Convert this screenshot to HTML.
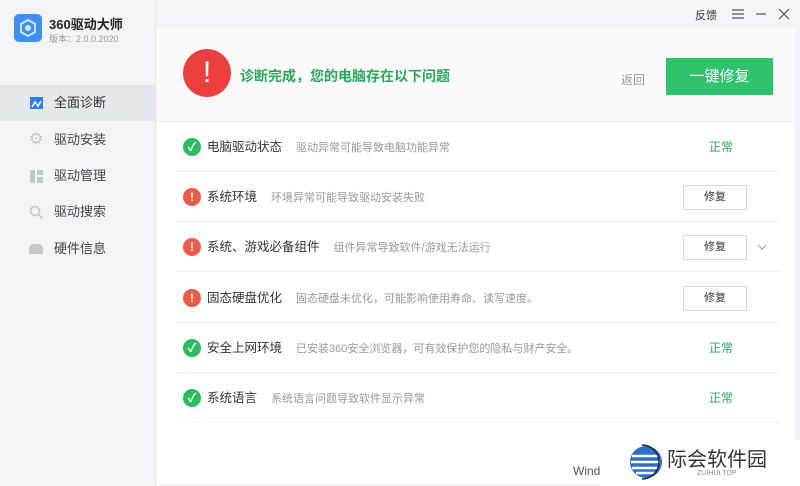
<!DOCTYPE html>
<html><head><meta charset="utf-8"><style>
*{margin:0;padding:0;box-sizing:border-box}
body{width:800px;height:486px;overflow:hidden;background:#f2f4f7;font-family:"Liberation Sans","Noto Sans CJK SC",sans-serif;position:relative;color:#333}
.abs{position:absolute}
.side{left:0;top:0;width:156px;height:486px;background:#f2f4f7;border-right:1px solid #e6e8eb}
.nav{left:0;width:156px;height:36px;font-size:13px;color:#333;line-height:36px;padding-left:54px}
.nav.act{background:#e4e7ec}
.main{left:157px;top:28px;width:638px;height:456px;background:#fff}
.hdr{left:157px;top:28px;width:638px;height:94px;background:#fafafa;border-bottom:1px solid #eee}
.row{left:175px;width:605px;height:50px;border-bottom:1px solid #f0f0f0}
.ic{position:absolute;left:8px;top:16px;width:18px;height:18px;border-radius:50%;color:#fff;font-size:12px;font-weight:bold;text-align:center;line-height:18px}
.ok{background:#2bbd5f}.er{background:#ec5a4a}
.t{position:absolute;left:32px;top:16px;font-size:12.5px;color:#333;line-height:18px}
.d{font-size:11px;color:#999;margin-left:14px}
.n{position:absolute;left:534px;top:16px;font-size:12px;color:#2aa85a;line-height:18px}
.b{position:absolute;left:508px;top:13px;width:64px;height:25px;border:1px solid #d8d8d8;background:#fff;font-size:11px;text-align:center;line-height:23px;color:#333}
</style></head><body>
<div class="abs side"></div>
<div class="abs" style="left:14px;top:14px;width:28px;height:28px;background:#3d8ff0;border-radius:5px"><svg width="28" height="28"><polygon points="14,6 21,10 21,18 14,22 7,18 7,10" fill="none" stroke="#cfe4ff" stroke-width="2"/><circle cx="14" cy="14" r="3" fill="#cfe4ff"/></svg></div>
<div class="abs" style="left:49px;top:14px;font-size:13px;font-weight:bold;color:#222">360驱动大师</div>
<div class="abs" style="left:49px;top:32px;font-size:9px;color:#999">版本：2.0.0.2020</div>
<div class="abs nav act" style="top:85px">全面诊断</div>
<div class="abs" style="left:30px;top:97px;width:13px;height:12px;background:#2f7fe8"><svg width="13" height="12"><polyline points="2,9 5,4 8,8 11,3" fill="none" stroke="#fff" stroke-width="1.5"/></svg></div>
<div class="abs nav" style="top:122px;color:#444">驱动安装</div>
<div class="abs" style="left:29px;top:132px;font-size:16px;color:#c4c7cc;line-height:16px">⚙</div>
<div class="abs nav" style="top:158px;color:#444">驱动管理</div>
<div class="abs" style="left:30px;top:170px;width:5px;height:13px;background:#c4c7cc"></div><div class="abs" style="left:37px;top:170px;width:6px;height:5px;background:#c4c7cc"></div><div class="abs" style="left:37px;top:177px;width:6px;height:6px;background:#c4c7cc"></div>
<div class="abs nav" style="top:194px;color:#444">驱动搜索</div>
<svg class="abs" style="left:29px;top:205px" width="15" height="15"><circle cx="6" cy="6" r="4.5" fill="none" stroke="#c4c7cc" stroke-width="1.6"/><line x1="9.5" y1="9.5" x2="13.5" y2="13.5" stroke="#c4c7cc" stroke-width="1.8"/></svg>
<div class="abs nav" style="top:231px;color:#444">硬件信息</div>
<div class="abs" style="left:29px;top:244px;width:14px;height:10px;background:#c4c7cc;border-radius:5px 5px 1px 1px"></div>

<div class="abs" style="left:695px;top:7px;font-size:11px;color:#333">反馈</div>
<svg class="abs" style="left:731px;top:8px" width="14" height="12"><path d="M1 2H13M1 6H13M1 10H13" stroke="#555" stroke-width="1.2"/></svg>
<svg class="abs" style="left:755px;top:8px" width="12" height="12"><path d="M1 6H11" stroke="#555" stroke-width="1.2"/></svg>
<svg class="abs" style="left:778px;top:8px" width="12" height="12"><path d="M1 1L11 11M11 1L1 11" stroke="#555" stroke-width="1.2"/></svg>

<div class="abs main"></div>
<div class="abs hdr"></div>
<div class="abs" style="left:183px;top:49px;width:48px;height:48px;border-radius:50%;background:#ec3f3f;color:#fff;font-size:30px;text-align:center;line-height:48px">!</div>
<div class="abs" style="left:240px;top:66px;font-size:14px;font-weight:bold;color:#2aa85a">诊断完成，您的电脑存在以下问题</div>
<div class="abs" style="left:621px;top:71px;font-size:12px;color:#999">返回</div>
<div class="abs" style="left:666px;top:58px;width:107px;height:37px;background:#2ec46b;color:#fff;font-size:15px;text-align:center;line-height:37px">一键修复</div>

<div class="abs row" style="top:122px"><div class="ic ok">✓</div><div class="t">电脑驱动状态<span class="d">驱动异常可能导致电脑功能异常</span></div><div class="n">正常</div></div>
<div class="abs row" style="top:172px"><div class="ic er">!</div><div class="t">系统环境<span class="d">环境异常可能导致驱动安装失败</span></div><div class="b">修复</div></div>
<div class="abs row" style="top:222px"><div class="ic er">!</div><div class="t">系统、游戏必备组件<span class="d">组件异常导致软件/游戏无法运行</span></div><div class="b">修复</div><svg style="position:absolute;left:582px;top:21px" width="10" height="8"><path d="M1 2L5 6L9 2" fill="none" stroke="#999"/></svg></div>
<div class="abs row" style="top:273px"><div class="ic er">!</div><div class="t">固态硬盘优化<span class="d">固态硬盘未优化，可能影响使用寿命、读写速度。</span></div><div class="b">修复</div></div>
<div class="abs row" style="top:323px"><div class="ic ok">✓</div><div class="t">安全上网环境<span class="d">已安装360安全浏览器，可有效保护您的隐私与财产安全。</span></div><div class="n">正常</div></div>
<div class="abs row" style="top:373px"><div class="ic ok">✓</div><div class="t">系统语言<span class="d">系统语言问题导致软件显示异常</span></div><div class="n">正常</div></div>

<div class="abs" style="left:573px;top:464px;font-size:12px;color:#555">Wind</div>
<div class="abs" style="left:600px;top:440px;width:200px;height:46px;background:#fff"></div>
<svg class="abs" style="left:628px;top:442px" width="36" height="40"><circle cx="18" cy="20" r="16" fill="#2f6fc9"/><path d="M4 14H30M3 20H32M4 26H30M8 31H27" stroke="#fff" stroke-width="2.5"/><path d="M14 3A17 17 0 0 1 14 37" fill="none" stroke="#223" stroke-width="1.5"/></svg>
<div class="abs" style="left:667px;top:443px;font-size:20px;color:#333">际会软件园</div>
<div class="abs" style="left:697px;top:470px;font-size:7px;color:#888">ZUIHUI.TOP</div>
</body></html>
